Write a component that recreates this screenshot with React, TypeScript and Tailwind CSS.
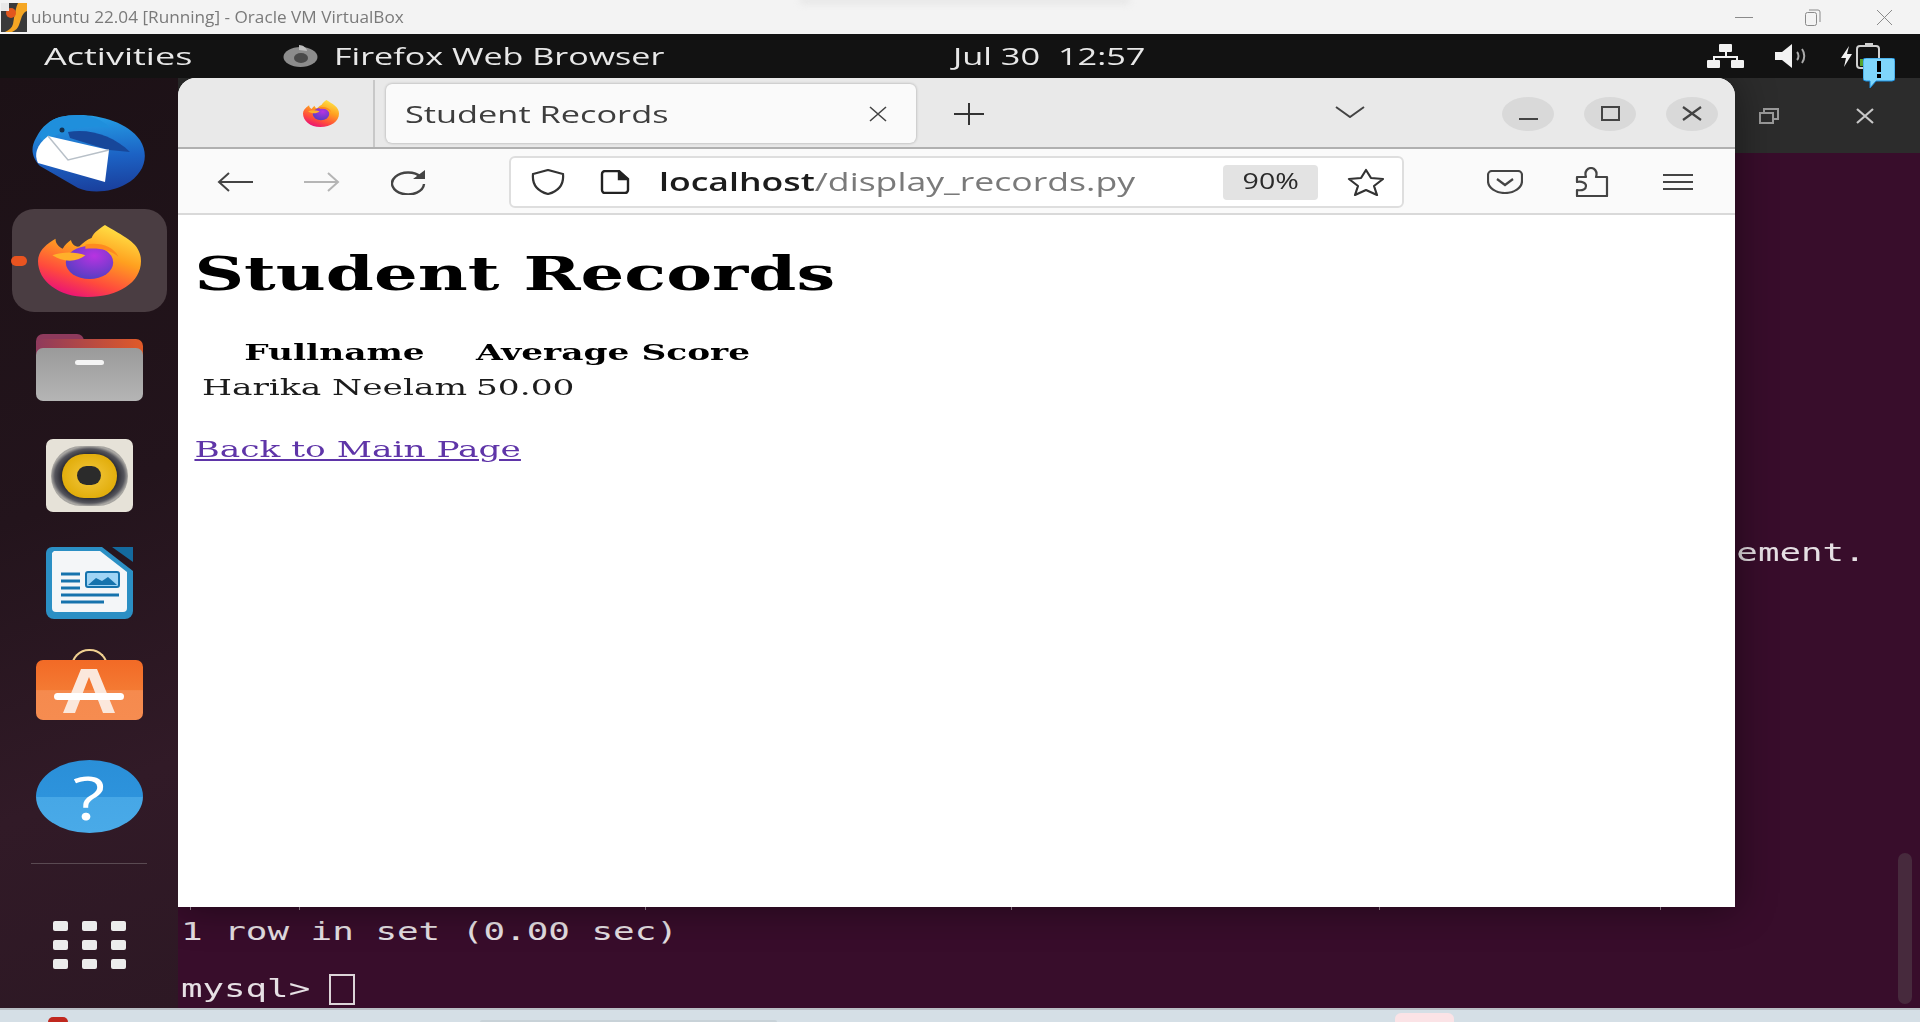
import React from "react";

const ubuntu = "font-['Open_Sans','Noto_Sans',sans-serif]";
const wide = "inline-block origin-left whitespace-nowrap";

function VBoxIcon() {
  return (
    <svg viewBox="0 0 26 29" className="w-[26px] h-[29px] shrink-0" preserveAspectRatio="none">
      <rect width="26" height="29" fill="#3a3a3a" />
      <path d="M17 0h9v8c-3 1-5 4-6 8l-2 6c-1 3-3 5-7 7H4c4-2 7-4 8-8l1-6c1-5 2-11 4-15z" fill="#f5a623" />
      <circle cx="10" cy="10" r="5" fill="#e2571e" />
      <rect x="0" y="0" width="8" height="8" fill="#e8e8e8" />
    </svg>
  );
}

function Tray() {
  return (
    <div className="flex items-center ml-[107px] relative">
      <svg viewBox="0 0 37 24" className="w-[37px] h-[24px]" fill="#f2f2f2">
        <rect x="12" y="0" width="13" height="8" rx="1" />
        <rect x="0" y="16" width="13" height="8" rx="1" />
        <rect x="24" y="16" width="13" height="8" rx="1" />
        <path d="M18 8h2v4h11v4h-2v-2H8v2H6v-4h12z" />
      </svg>
      <svg viewBox="0 0 35 24" className="w-[35px] h-[26px] ml-[31px]" fill="none">
        <path d="M0 8h7l10-8v24L7 16H0z" fill="#f2f2f2" />
        <path d="M22 8c2 2 2 6 0 8M27 5c3 4 3 10 0 14" stroke="#aaa" strokeWidth="2" />
      </svg>
      <svg viewBox="0 0 42 26" className="w-[42px] h-[26px] ml-[30px]" fill="none">
        <path d="M9 3L1 15h5l-2 9 8-13H7z" fill="#f2f2f2" />
        <rect x="17" y="3" width="22" height="22" rx="3" stroke="#d0d0d0" strokeWidth="2" />
        <rect x="25" y="0" width="8" height="3" fill="#d0d0d0" />
        <rect x="20" y="16" width="16" height="7" fill="#55a32a" />
      </svg>
      <svg viewBox="0 0 32 30" className="w-[32px] h-[30px] absolute left-[156px] top-[15px]">
        <path d="M3 0h26a3 3 0 0 1 3 3v17a3 3 0 0 1-3 3H13l-6 7v-7H3a3 3 0 0 1-3-3V3a3 3 0 0 1 3-3z" fill="#7fd6fb" stroke="#1a8fe0" strokeWidth="1" />
        <rect x="14" y="3" width="4" height="11" fill="#000" />
        <rect x="14" y="16" width="4" height="4" fill="#000" />
      </svg>
    </div>
  );
}

function FirefoxLogo({ className, id }: { className: string; id: string }) {
  return (
    <svg viewBox="0 0 100 100" className={className} preserveAspectRatio="none">
      <defs>
        <linearGradient id={id + "a"} x1="0.8" y1="0" x2="0.3" y2="1">
          <stop offset="0" stopColor="#ffe94a" />
          <stop offset="0.4" stopColor="#ffa01f" />
          <stop offset="0.75" stopColor="#ff4a3d" />
          <stop offset="1" stopColor="#e8107a" />
        </linearGradient>
        <radialGradient id={id + "b"} cx="0.6" cy="0.3" r="0.8">
          <stop offset="0" stopColor="#b833e1" />
          <stop offset="1" stopColor="#4b3fc0" />
        </radialGradient>
      </defs>
      <path
        d="M65 0C72 6 82 14 88 20C96 28 100 38 100 50C100 80 78 100 48 100C20 100 0 78 0 50C0 38 6 28 17 19C17 26 20 30 24 33C26 28 29 24 32 21C33 27 36 31 40 30C44 24 48 20 52 18C54 10 60 5 65 0Z"
        fill={`url(#${id}a)`}
      />
      <circle cx="50" cy="52" r="23" fill={`url(#${id}b)`} />
      <path d="M14 42C24 37 36 37 46 42C38 52 24 52 14 42Z" fill="#ffb02a" />
      <path d="M46 27C60 23 74 30 78 44C70 35 60 31 46 33Z" fill="#ff8a1f" />
    </svg>
  );
}

function Dock() {
  return (
    <aside className="w-[178px] shrink-0 bg-[linear-gradient(160deg,#1c1116_0%,#23141c_45%,#311a27_75%,#2d1824_100%)] flex flex-col items-center relative">
      {/* thunderbird */}
      <svg viewBox="0 0 116 78" className="w-[116px] h-[78px] mt-[36px] ml-[-2px]" preserveAspectRatio="none">
        <defs>
          <linearGradient id="tbBody" x1="0.5" y1="0" x2="0.6" y2="1">
            <stop offset="0" stopColor="#25a0e6" />
            <stop offset="0.55" stopColor="#1c62c4" />
            <stop offset="1" stopColor="#1a3f9c" />
          </linearGradient>
        </defs>
        <path d="M30 3C55-3 95 4 110 26C120 42 114 60 96 70C82 78 62 80 48 74L10 52C2 44 0 34 6 24C12 12 20 6 30 3Z" fill="url(#tbBody)" />
        <path d="M30 3C50-2 70 2 80 14C60 10 36 14 18 26C12 28 10 26 10 22C14 12 20 6 30 3Z" fill="#1f8fdc" />
        <path d="M38 18C60 14 84 22 100 38L79 36L40 24Z" fill="#17479a" />
        <path d="M18 22l61 14-4 32-67-19c-4-8-2-18 10-27z" fill="#fff" />
        <path d="M18 22l20 24 41-10" stroke="#b8c0c8" strokeWidth="1.5" fill="none" />
        <circle cx="32" cy="16" r="2.5" fill="#13304f" />
      </svg>
      <div className="w-[155px] h-[103px] mt-[17px] rounded-[22px] bg-[#4a3d42] relative flex items-center justify-center">
        <div className="absolute left-[-1px] top-[47px] w-[16px] h-[10px] rounded-full bg-[#e95420]" />
        <FirefoxLogo id="dockfx" className="w-[103px] h-[72px] mt-[1px]" />
      </div>
      {/* files */}
      <div className="w-[107px] h-[67px] mt-[22px] relative">
        <div className="absolute left-0 top-0 w-[48px] h-[20px] rounded-t-[7px] bg-[#8e3a5c]" />
        <div className="absolute inset-x-0 top-[5px] h-[28px] rounded-t-[7px] bg-[linear-gradient(90deg,#8e3a5c,#e05a28)]" />
        <div className="absolute inset-x-0 bottom-0 h-[53px] rounded-[7px] bg-[linear-gradient(180deg,#9a9a9a,#b5b5b5)] flex justify-center">
          <div className="w-[29px] h-[5px] mt-[12px] rounded-full bg-[#f4f4f4]" />
        </div>
      </div>
      {/* rhythmbox */}
      <div className="w-[87px] h-[73px] mt-[38px] rounded-[7px] bg-[#e6e2d8] flex items-center justify-center">
        <div className="w-[77px] h-[60px] rounded-full bg-[radial-gradient(closest-side,#2a2a32_72%,#55555c_90%,#a8a6a2_100%)] flex items-center justify-center">
          <div className="w-[55px] h-[44px] rounded-full bg-[radial-gradient(closest-side,#f3c840,#e2ae0c)] flex items-center justify-center">
            <div className="w-[24px] h-[19px] rounded-full bg-[#2b2b2b]" />
          </div>
        </div>
      </div>
      {/* writer */}
      <svg viewBox="0 0 87 72" className="w-[87px] h-[72px] mt-[35px]" preserveAspectRatio="none">
        <path d="M6 0h50l31 24v40a8 8 0 0 1-8 8H8a8 8 0 0 1-8-8V6a6 6 0 0 1 6-6z" fill="#2b8fc4" />
        <path d="M8 4h46l27 21v36a4 4 0 0 1-4 4H10a4 4 0 0 1-4-4V6z" fill="#f4f6f8" />
        <path d="M66 0h21v15z" fill="#146a9e" />
        <rect x="40" y="25" width="33" height="15" rx="2" fill="#9fd4f5" stroke="#1673ad" strokeWidth="2" />
        <path d="M42 38l8-7 6 3 6-4 9 8z" fill="#1673ad" />
        <path d="M15 27h19M15 34h19M15 41h19M15 48h58M15 55h43" stroke="#1673ad" strokeWidth="3" />
      </svg>
      {/* software */}
      <div className="w-[107px] h-[71px] mt-[30px] relative">
        <div className="absolute left-[35px] top-0 w-[37px] h-[18px] rounded-t-full border-2 border-b-0 border-[#f0d090]" />
        <div className="absolute inset-x-0 bottom-0 h-[60px] rounded-[7px] bg-[linear-gradient(180deg,#f26a26_0%,#f47a33_50%,#f58a4e_51%,#f68c50_100%)]" />
        <svg viewBox="0 0 70 44" className="absolute left-[18px] top-[20px] w-[70px] h-[44px]">
          <path d="M27 0h16l18 44H49l-14-36-14 36H9z" fill="#fbe8dc" />
          <rect x="0" y="24" width="70" height="7" rx="3.5" fill="#fff" />
        </svg>
      </div>
      {/* help */}
      <div className="w-[107px] h-[73px] mt-[40px] rounded-[50%] bg-[linear-gradient(180deg,#2a8fd8_0%,#2d93dc_50%,#46a7e6_51%,#49aae8_100%)] flex items-center justify-center text-white font-['Open_Sans',sans-serif] text-[60px] leading-none">
        <span className="inline-block scale-x-[1.25]">?</span>
      </div>
      <div className="w-[116px] h-px mt-[30px] bg-[#5a4a52]" />
      <div className="grid grid-cols-3 gap-x-[14px] gap-y-[9px] mt-[57px]">
        {Array.from({ length: 9 }).map((_, i) => (
          <div key={i} className="w-[15px] h-[10px] rounded-[2px] bg-[#ececec]" />
        ))}
      </div>
    </aside>
  );
}

function BrowserWindow() {
  return (
    <div className="absolute z-10 left-0 top-0 w-[1557px] h-[829px] rounded-t-[18px] overflow-hidden flex flex-col bg-white shadow-[0_0_40px_rgba(0,0,0,0.45)]">
      {/* tab strip */}
      <div className="h-[71px] shrink-0 pt-[2px] bg-[#e9e9e9] border-b-2 border-[#b0b0b0] flex items-center text-[#3d3d3d]">
        <div className="w-[197px] h-full shrink-0 border-r-2 border-[#c8c8c8] flex items-center">
          <FirefoxLogo id="tabfx" className="w-[36px] h-[27px] ml-[125px]" />
        </div>
        <div className="w-[530px] h-[59px] ml-[11px] shrink-0 rounded-[6px] bg-[#fafafa] shadow-[0_0_3px_rgba(0,0,0,0.3)] flex items-center">
          <span className={`${ubuntu} ${wide} ml-[19px] w-[265px] text-[24px] text-[#3d3d3d] scale-x-[1.43]`}>Student Records</span>
          <svg viewBox="0 0 20 16" className="w-[20px] h-[16px] ml-[198px]" fill="none" stroke="#444" strokeWidth="1.6">
            <path d="M2 1l16 14M18 1L2 15" />
          </svg>
        </div>
        <svg viewBox="0 0 30 22" className="w-[30px] h-[22px] ml-[38px]" fill="none" stroke="#333" strokeWidth="2">
          <path d="M0 11h30M15 0v22" />
        </svg>
        <svg viewBox="0 0 30 12" className="w-[30px] h-[12px] ml-[351px] mb-[3px]" fill="none" stroke="#444" strokeWidth="2">
          <path d="M1 1l14 10L29 1" />
        </svg>
        <div className="flex gap-[30px] ml-[137px]">
          <div className="w-[52px] h-[34px] rounded-[50%] bg-[#d9d9d9] flex items-center justify-center">
            <div className="w-[19px] h-[2px] mt-[10px] bg-[#444]" />
          </div>
          <div className="w-[52px] h-[34px] rounded-[50%] bg-[#d9d9d9] flex items-center justify-center">
            <div className="w-[19px] h-[15px] border-2 border-[#444]" />
          </div>
          <div className="w-[52px] h-[34px] rounded-[50%] bg-[#d9d9d9] flex items-center justify-center">
            <svg viewBox="0 0 20 15" className="w-[20px] h-[15px]" fill="none" stroke="#444" strokeWidth="2.2">
              <path d="M1 1l18 13M19 1L1 14" />
            </svg>
          </div>
        </div>
      </div>
      {/* toolbar */}
      <div className="h-[66px] shrink-0 pt-[2px] bg-[#fafafa] border-b-2 border-[#d9d9d9] flex items-center">
        <svg viewBox="0 0 36 20" className="w-[36px] h-[20px] ml-[39px]" fill="none" stroke="#444" strokeWidth="2">
          <path d="M36 10H2M12 1L2 10l10 9" />
        </svg>
        <svg viewBox="0 0 36 20" className="w-[36px] h-[20px] ml-[51px]" fill="none" stroke="#b5b5b5" strokeWidth="2">
          <path d="M0 10h34M24 1l10 9-10 9" />
        </svg>
        <svg viewBox="0 0 36 26" className="w-[36px] h-[26px] ml-[51px]" fill="none" stroke="#444" strokeWidth="2.4">
          <path d="M30 8A16 11 0 1 0 33 15" />
          <path d="M34 1v9H22z" fill="#444" stroke="none" />
        </svg>
        <div className="w-[895px] h-[52px] ml-[82px] shrink-0 rounded-[6px] bg-white border-2 border-[#dedede] flex items-center">
          <svg viewBox="0 0 36 26" className="w-[36px] h-[26px] ml-[19px]" fill="none" stroke="#333" strokeWidth="2.2">
            <path d="M18 1l15 4c1 10-4 17-15 20C7 22 2 15 3 5z" />
          </svg>
          <svg viewBox="0 0 30 24" className="w-[30px] h-[24px] ml-[34px]" fill="none" stroke="#222" strokeWidth="2.4">
            <path d="M2 4a3 3 0 0 1 3-3h14l9 8v11a3 3 0 0 1-3 3H5a3 3 0 0 1-3-3z" />
            <path d="M19 1v8h9" fill="#222" />
          </svg>
          <span className={`${ubuntu} ${wide} ml-[29px] w-[476px] text-[25px] scale-x-[1.425] text-[#7a7a7a]`}>
            <span className="font-semibold text-[#1c1c1c]">localhost</span>/display_records.py
          </span>
          <div className={`${ubuntu} w-[95px] h-[35px] ml-[88px] rounded-[4px] bg-[#e3e3e3] flex items-center justify-center text-[#2a2a2a]`}>
            <span className="inline-block whitespace-nowrap font-medium text-[21px] scale-x-[1.36]">90%</span>
          </div>
          <svg viewBox="0 0 38 28" className="w-[38px] h-[28px] ml-[29px]" fill="none" stroke="#333" strokeWidth="2.2" strokeLinejoin="round">
            <path d="M19 2l5 8 12 1-9 7 3 9-11-5-11 5 3-9-9-7 12-1z" />
          </svg>
        </div>
        <svg viewBox="0 0 36 24" className="w-[36px] h-[24px] ml-[83px]" fill="none" stroke="#444" strokeWidth="2.2">
          <path d="M5 1h26a4 4 0 0 1 4 4v6c0 7-8 12-17 12S1 18 1 11V5a4 4 0 0 1 4-4z" />
          <path d="M10 9l8 6 8-6" />
        </svg>
        <svg viewBox="0 0 34 30" className="w-[34px] h-[30px] ml-[52px]" fill="none" stroke="#444" strokeWidth="2.2" strokeLinejoin="round">
          <path d="M2 10h9c-2-6 2-9 5-9s7 3 5 9h11v19H2v-6c6 1 9-1 9-4s-4-5-9-4z" />
        </svg>
        <svg viewBox="0 0 32 18" className="w-[32px] h-[18px] ml-[53px]" fill="none" stroke="#444" strokeWidth="2">
          <path d="M1 2h30M1 9h30M1 16h30" />
        </svg>
      </div>
      {/* page */}
      <main className="flex-1 bg-white">
        <div className="origin-top-left scale-x-[1.495] pl-[11px] pt-[31px] font-['DejaVu_Serif',serif] text-[23px] text-black">
          <h1 className="text-[46px] leading-[56px] font-bold">Student Records</h1>
          <table className="mt-[31px] ml-[-1px] border-separate border-spacing-x-[6px] border-spacing-y-[3px]">
            <thead>
              <tr>
                <th className="font-bold text-center leading-[32px] p-0">Fullname</th>
                <th className="font-bold text-center leading-[32px] p-0">Average Score</th>
              </tr>
            </thead>
            <tbody>
              <tr>
                <td className="leading-[32px] p-0 text-[#1c1c1c]">Harika Neelam</td>
                <td className="leading-[32px] p-0 text-[#1c1c1c]">50.00</td>
              </tr>
            </tbody>
          </table>
          <a className="block mt-[28px] leading-[30px] underline text-[#5f35a8]" href="#">Back to Main Page</a>
        </div>
      </main>
    </div>
  );
}

function Terminal() {
  const mono = "font-['DejaVu_Sans_Mono',monospace] text-[24px] text-[#e6e0e4]";
  return (
    <div className="flex-1 relative flex flex-col bg-[#380d2b] overflow-hidden">
      <BrowserWindow />
      <div className="h-[75px] shrink-0 bg-[#2c2c2c] flex items-center justify-end">
        <svg viewBox="0 0 20 16" className="w-[20px] h-[16px] mr-[76px]" fill="none" stroke="#9a9a9a" strokeWidth="2">
          <rect x="1" y="5" width="13" height="10" />
          <path d="M5 5V1h14v10h-5" />
        </svg>
        <svg viewBox="0 0 20 16" className="w-[20px] h-[16px] mr-[45px]" fill="none" stroke="#c8c8c8" strokeWidth="2.2">
          <path d="M2 1l16 14M18 1L2 15" />
        </svg>
      </div>
      <div className="flex justify-end pr-[54px] mt-[382px]">
        <span className={`${mono} w-[87px] inline-block whitespace-nowrap origin-right scale-x-[1.49]`}>ement.</span>
      </div>
      <div className={`${mono} mt-auto pl-[3px]`}>
        <div className={`${wide} scale-x-[1.495] leading-[32px] translate-y-[2px]`}>1 row in set (0.00 sec)</div>
        <div className="flex items-center h-[34px] mt-[24px] mb-[2px]">
          <span className={`${wide} w-[148px] scale-x-[1.49]`}>mysql&gt;</span>
          <div className="w-[26px] h-[31px] border-2 border-[#dcd4d8]" />
        </div>
      </div>
      {/* bottoms of the table's + signs showing under the browser */}
      <div className="absolute left-[12px] top-[829px] w-px h-[3px] bg-[#a08a9a]" />
      <div className="absolute left-[121px] top-[829px] w-px h-[3px] bg-[#a08a9a]" />
      <div className="absolute left-[467px] top-[829px] w-px h-[3px] bg-[#a08a9a]" />
      <div className="absolute left-[833px] top-[829px] w-px h-[3px] bg-[#a08a9a]" />
      <div className="absolute left-[1201px] top-[829px] w-px h-[3px] bg-[#a08a9a]" />
      <div className="absolute left-[1482px] top-[829px] w-px h-[3px] bg-[#a08a9a]" />
      <div className="absolute right-[8px] bottom-[4px] w-[14px] h-[151px] rounded-full bg-[#472a3d]" />
    </div>
  );
}

export default function App() {
  return (
    <div className="w-[1920px] h-[1022px] overflow-hidden flex flex-col bg-[#380d2b]">
      {/* VirtualBox title bar */}
      <header className="h-[34px] shrink-0 bg-[#f3f3f3] flex items-center text-[#7a7a7a] relative">
        <div className="absolute left-[800px] top-[-3px] w-[330px] h-[7px] rounded-full bg-[#e6e6e6] blur-[3px]" />
        <div className="ml-[1px]"><VBoxIcon /></div>
        <span className="ml-[4px] w-[373px] font-['Open_Sans',sans-serif] text-[17px] whitespace-nowrap inline-block origin-left scale-x-[1.01]">ubuntu 22.04 [Running] - Oracle VM VirtualBox</span>
        <div className="ml-auto flex items-center">
          <div className="w-[18px] h-px bg-[#8a8a8a]" />
          <svg viewBox="0 0 16 17" className="w-[16px] h-[17px] ml-[52px]" fill="none" stroke="#8a8a8a">
            <rect x="0.5" y="3.5" width="11" height="13" rx="2" />
            <path d="M4 1h9a2 2 0 0 1 2 2v10" />
          </svg>
          <svg viewBox="0 0 17 17" className="w-[17px] h-[17px] ml-[55px] mr-[27px]" fill="none" stroke="#8a8a8a">
            <path d="M1 1l15 15M16 1L1 16" />
          </svg>
        </div>
      </header>
      {/* GNOME top bar */}
      <div className={`${ubuntu} h-[44px] shrink-0 bg-[#121212] flex items-center text-[#e8e8e8] text-[24px] relative z-20`}>
        <span className={`${wide} ml-[44px] w-[148px] scale-x-[1.5]`}>Activities</span>
        <svg viewBox="0 0 35 22" className="w-[35px] h-[22px] ml-[91px]">
          <ellipse cx="17.5" cy="12" rx="17" ry="10" fill="#8c8c8c" />
          <ellipse cx="18" cy="13" rx="7" ry="5" fill="#4a4a4a" />
          <path d="M16 0c4 0 8 3 8 6l-8-1z" fill="#bdbdbd" />
        </svg>
        <span className={`${wide} ml-[16px] w-[328px] scale-x-[1.42]`}>Firefox Web Browser</span>
        <span className={`${wide} ml-[291px] w-[193px] scale-x-[1.43]`}>Jul 30&nbsp;&nbsp;12:57</span>
        <div className="ml-[454px]"><Tray /></div>
      </div>
      <div className="flex-1 flex min-h-0">
        <Dock />
        <Terminal />
      </div>
      {/* host taskbar, cut off at the bottom */}
      <footer className="h-[14px] shrink-0 bg-[#d5dfe6] border-t-2 border-[#b8bec4] flex">
        <div className="w-[20px] h-[5px] ml-[48px] mt-[7px] rounded-t-full bg-[#c0281e]" />
        <div className="w-[297px] h-[2px] ml-[412px] mt-[10px] rounded-t-[6px] bg-[#c8d2d8]" />
        <div className="w-[59px] h-[9px] ml-[618px] mt-[3px] rounded-t-[6px] bg-[#fbe3e6]" />
      </footer>
    </div>
  );
}
